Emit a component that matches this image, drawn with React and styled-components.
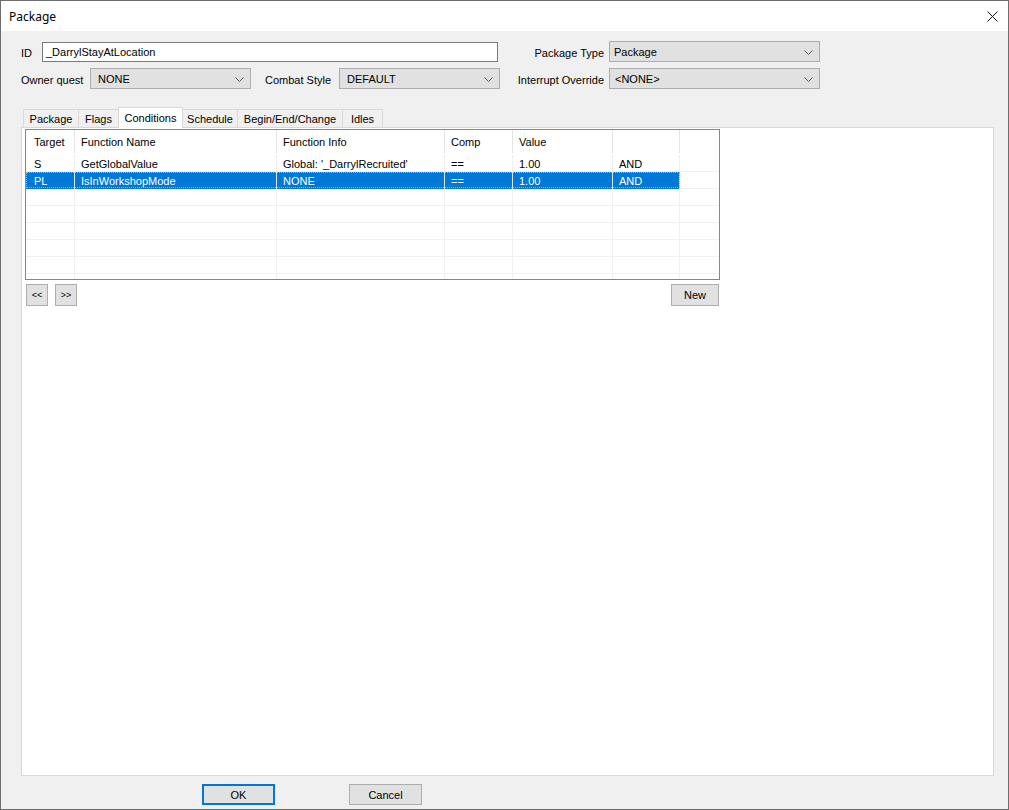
import React from 'react';
import styled, { createGlobalStyle, css } from 'styled-components';

const GlobalStyle = createGlobalStyle`
	html, body {
		margin: 0;
		padding: 0;
		background: #ffffff;
	}
	* {
		box-sizing: border-box;
	}
`;

const columns = [
	{ key: 'target', title: 'Target', width: 49, pad: 8 },
	{ key: 'fn', title: 'Function Name', width: 202, pad: 6 },
	{ key: 'info', title: 'Function Info', width: 168, pad: 6 },
	{ key: 'comp', title: 'Comp', width: 68, pad: 6 },
	{ key: 'value', title: 'Value', width: 100, pad: 6 },
	{ key: 'op', title: '', width: 67, pad: 6 },
];

const rows = [
	{ target: 'S', fn: 'GetGlobalValue', info: "Global: '_DarrylRecruited'", comp: '==', value: '1.00', op: 'AND' },
	{ target: 'PL', fn: 'IsInWorkshopMode', info: 'NONE', comp: '==', value: '1.00', op: 'AND', selected: true },
	{}, {}, {}, {}, {}, {},
];

const tabs = [
	{ label: 'Package', width: 56 },
	{ label: 'Flags', width: 41 },
	{ label: 'Conditions', width: 65, active: true },
	{ label: 'Schedule', width: 56 },
	{ label: 'Begin/End/Change', width: 106 },
	{ label: 'Idles', width: 41 },
];

function Chevron() {
	return (
		<svg width='9' height='5' viewBox='0 0 9 5'>
			<path d='M0.5 0.5 L4.5 4.5 L8.5 0.5' fill='none' stroke='#555' strokeWidth='1' />
		</svg>
	);
}

function Select({ value, width, pad }) {
	return (
		<SelectBox $width={width} $pad={pad}>
			<span>{value}</span>
			<Chevron />
		</SelectBox>
	);
}

export default function App() {
	return (
		<>
			<GlobalStyle />
			<Window>
				<TitleBar>
					<Title>Package</Title>
					<svg width='11' height='11' viewBox='0 0 11 11'>
						<path d='M0.5 0.5 L10.5 10.5 M10.5 0.5 L0.5 10.5' stroke='#111' strokeWidth='1' />
					</svg>
				</TitleBar>
				<Body>
					<FormRow>
						<Label $width={21}>ID</Label>
						<TextInput>_DarrylStayAtLocation</TextInput>
						<Label $width={111} $right>Package Type</Label>
						<Select value='Package' width={211} pad={4} />
					</FormRow>
					<FormRow $gap>
						<Label $width={69}>Owner quest</Label>
						<Select value='NONE' width={161} pad={7} />
						<Label $width={88} $right $padRight={8}>Combat Style</Label>
						<Select value='DEFAULT' width={161} pad={7} />
						<Label $width={109} $right>Interrupt Override</Label>
						<Select value='<NONE>' width={211} pad={5} />
					</FormRow>

					<TabStrip>
						{tabs.map((t) => (
							<Tab key={t.label} $width={t.width} $active={t.active}>
								{t.label}
							</Tab>
						))}
					</TabStrip>

					<TabPanel>
						<ListView>
							<HeaderRow>
								{columns.map((c) => (
									<HeaderCell key={c.key} $width={c.width} $pad={c.pad}>
										{c.title}
									</HeaderCell>
								))}
							</HeaderRow>
							{rows.map((r, i) => (
								<Row key={i}>
									<RowCells $selected={r.selected}>
										{columns.map((c) => (
											<Cell key={c.key} $width={c.width} $pad={c.pad} $selected={r.selected}>
												{r[c.key] || ''}
											</Cell>
										))}
									</RowCells>
								</Row>
							))}
						</ListView>
						<ButtonRow>
							<NavGroup>
								<SmallButton $width={22} $small>&lt;&lt;</SmallButton>
								<SmallButton $width={22} $small>&gt;&gt;</SmallButton>
							</NavGroup>
							<SmallButton $width={48}>New</SmallButton>
						</ButtonRow>
					</TabPanel>

					<Footer>
						<DialogButton $default>OK</DialogButton>
						<DialogButton>Cancel</DialogButton>
					</Footer>
				</Body>
			</Window>
		</>
	);
}

const uiFont = css`
	font-family: 'Liberation Sans', Arial, sans-serif;
	font-size: 11px;
	color: #000;
`;

const Window = styled.div`
	width: 1009px;
	height: 810px;
	border: 1px solid #6e6e6e;
	display: flex;
	flex-direction: column;
	background: #f0f0f0;
	${uiFont}
`;

const TitleBar = styled.div`
	height: 30px;
	flex: none;
	background: #ffffff;
	display: flex;
	align-items: center;
	justify-content: space-between;
	padding: 0 10px 0 8px;
`;

const Title = styled.div`
	font-family: 'Segoe UI', 'Noto Sans', 'Open Sans', sans-serif;
	font-size: 12px;
	color: #000;
	padding-top: 1px;
`;

const Body = styled.div`
	flex: 1;
	display: flex;
	flex-direction: column;
	padding: 10px 14px 0 20px;
	min-height: 0;
`;

const FormRow = styled.div`
	display: flex;
	align-items: center;
	height: 21px;
	margin-top: ${(p) => (p.$gap ? '6px' : '0')};
`;

const Label = styled.div`
	width: ${(p) => p.$width}px;
	flex: none;
	text-align: ${(p) => (p.$right ? 'right' : 'left')};
	padding-right: ${(p) => (p.$right ? p.$padRight || 5 : 0)}px;
	padding-top: 2px;
	white-space: nowrap;
`;

const TextInput = styled.div`
	width: 456px;
	height: 20px;
	flex: none;
	background: #ffffff;
	border: 1px solid #7a7a7a;
	padding-left: 3px;
	display: flex;
	align-items: center;
`;

const SelectBox = styled.div`
	width: ${(p) => p.$width}px;
	height: 21px;
	flex: none;
	background: #e1e1e1;
	border: 1px solid #adadad;
	display: flex;
	align-items: center;
	justify-content: space-between;
	padding: 0 6px 0 ${(p) => p.$pad}px;
	svg {
		margin-top: 1px;
	}
`;

const TabStrip = styled.div`
	display: flex;
	align-items: flex-end;
	height: 20px;
	margin-top: 18px;
	padding-left: 2px;
	position: relative;
	z-index: 1;
`;

const Tab = styled.div`
	width: ${(p) => p.$width}px;
	height: ${(p) => (p.$active ? 21 : 18)}px;
	margin-bottom: ${(p) => (p.$active ? -1 : 0)}px;
	background: ${(p) => (p.$active ? '#ffffff' : '#f0f0f0')};
	border: 1px solid #d9d9d9;
	border-bottom: none;
	display: flex;
	align-items: center;
	justify-content: center;
	white-space: nowrap;
	& + & {
		margin-left: -1px;
	}
`;

const TabPanel = styled.div`
	flex: 1;
	background: #ffffff;
	border: 1px solid #d9d9d9;
	padding: 1px 0 0 3px;
	min-height: 0;
`;

const ListView = styled.div`
	width: 695px;
	height: 151px;
	border: 1px solid #828790;
	background: #ffffff;
	overflow: hidden;
`;

const HeaderRow = styled.div`
	display: flex;
	height: 25px;
`;

const HeaderCell = styled.div`
	width: ${(p) => p.$width}px;
	flex: none;
	height: 23px;
	border-right: 1px solid #e5e5e5;
	padding-left: ${(p) => p.$pad}px;
	padding-top: 1px;
	display: flex;
	align-items: center;
	white-space: nowrap;
`;

const Row = styled.div`
	height: 17px;
	border-bottom: 1px solid #f0f0f0;
`;

const RowCells = styled.div`
	display: flex;
	width: 654px;
	height: 16px;
	outline: ${(p) => (p.$selected ? '1px dotted #f7a23c' : 'none')};
	outline-offset: -1px;
`;

const Cell = styled.div`
	width: ${(p) => p.$width}px;
	flex: none;
	height: 17px;
	border-right: 1px solid #f0f0f0;
	padding-left: ${(p) => p.$pad}px;
	display: flex;
	align-items: center;
	white-space: nowrap;
	overflow: hidden;
	background: ${(p) => (p.$selected ? '#0078d7' : 'transparent')};
	color: ${(p) => (p.$selected ? '#ffffff' : '#000000')};
	border-right-color: ${(p) => (p.$selected ? '#d8e8f6' : '#f0f0f0')};
`;

const ButtonRow = styled.div`
	width: 695px;
	display: flex;
	justify-content: space-between;
	margin-top: 4px;
	padding: 0 1px;
`;

const NavGroup = styled.div`
	display: flex;
	gap: 7px;
`;

const SmallButton = styled.div`
	width: ${(p) => p.$width}px;
	height: 22px;
	background: #e1e1e1;
	border: 1px solid #adadad;
	display: flex;
	align-items: center;
	justify-content: center;
	font-size: ${(p) => (p.$small ? 9 : 11)}px;
`;

const Footer = styled.div`
	height: 33px;
	flex: none;
	display: flex;
	align-items: flex-start;
	gap: 74px;
	padding: 8px 0 0 181px;
`;

const DialogButton = styled.div`
	width: 73px;
	height: 21px;
	background: #e1e1e1;
	border: ${(p) => (p.$default ? '2px solid #0078d7' : '1px solid #adadad')};
	display: flex;
	align-items: center;
	justify-content: center;
`;
